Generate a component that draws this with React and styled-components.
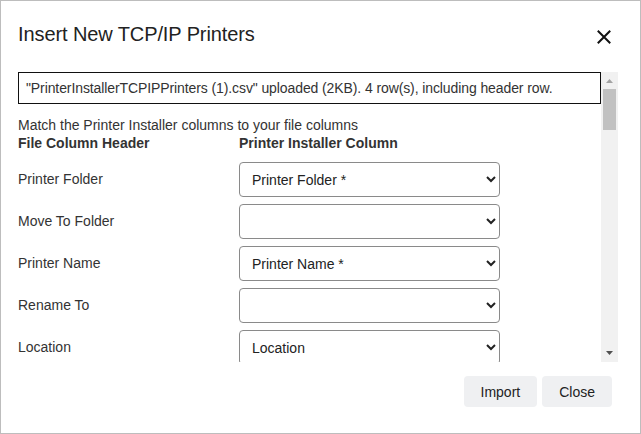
import React from 'react';
import styled, { createGlobalStyle } from 'styled-components';

const GlobalStyle = createGlobalStyle`
  html, body {
    margin: 0;
    padding: 0;
    background: #fff;
  }
  * {
    box-sizing: border-box;
  }
`;

const Dialog = styled.div`
  width: 641px;
  height: 434px;
  border: 1px solid #bdbdbd;
  background: #fff;
  display: flex;
  flex-direction: column;
  font-family: "Liberation Sans", Arial, sans-serif;
  color: #222;
`;

const Header = styled.div`
  display: flex;
  justify-content: space-between;
  align-items: flex-start;
  padding: 22px 29px 0 17px;
  height: 71px;
  flex-shrink: 0;
`;

const Title = styled.h2`
  margin: 0;
  font-size: 20px;
  font-weight: 400;
  line-height: 23px;
  letter-spacing: -0.1px;
  color: #222;
`;

const CloseButton = styled.button`
  border: none;
  background: none;
  padding: 0;
  margin-top: 7px;
  width: 14px;
  height: 14px;
  display: flex;
  cursor: pointer;
`;

const ScrollFrame = styled.div`
  display: flex;
  height: 290px;
  flex-shrink: 0;
  margin: 0 22px 0 17px;
`;

const ScrollArea = styled.div`
  flex: 1;
  min-width: 0;
  overflow: hidden;
  font-size: 14px;
`;

const ScrollBar = styled.div`
  width: 17px;
  flex-shrink: 0;
  background: #f1f1f1;
  display: flex;
  flex-direction: column;
`;

const ScrollArrow = styled.div`
  height: 17px;
  display: flex;
  justify-content: center;
  align-items: ${p => (p.$down ? 'flex-start' : 'flex-end')};
  padding: ${p => (p.$down ? '6px 0 0' : '0 0 6px')};
`;

const ScrollTrack = styled.div`
  flex: 1;
  padding: 0 2px;
`;

const ScrollThumb = styled.div`
  height: 41px;
  background: #c1c1c1;
`;

const FileBox = styled.div`
  border: 1px solid #111;
  height: 32px;
  padding: 0 7px;
  display: flex;
  align-items: center;
  color: #333;
  letter-spacing: -0.1px;
`;

const Intro = styled.div`
  margin-top: 12px;
  line-height: 18px;
  color: #333;
`;

const ColumnHeads = styled.div`
  display: grid;
  grid-template-columns: 221px 261px;
  line-height: 18px;
  font-weight: 700;
  color: #333;
`;

const Rows = styled.div`
  display: grid;
  grid-template-columns: 221px 261px;
  row-gap: 7px;
  margin-top: 10px;
  padding-bottom: 10px;
`;

const Label = styled.div`
  display: flex;
  align-items: center;
  height: 35px;
  padding-bottom: 1px;
  color: #333;
`;

const Select = styled.select`
  height: 35px;
  width: 261px;
  border: 1px solid #8a8a8a;
  border-radius: 4px;
  padding: 0 8px;
  font-family: "Liberation Sans", Arial, sans-serif;
  font-size: 14px;
  color: #222;
  background: #fff;
`;

const Footer = styled.div`
  display: flex;
  justify-content: flex-end;
  gap: 5px;
  padding: 14px 28px 0 0;
`;

const Button = styled.button`
  height: 31px;
  padding: 0 17px;
  border: none;
  border-radius: 4px;
  background: #eff0f2;
  font-family: "Liberation Sans", Arial, sans-serif;
  font-size: 14px;
  color: #222;
  cursor: pointer;
`;

const columns = [
  ['Printer Folder', 'Printer Folder *'],
  ['Move To Folder', ''],
  ['Printer Name', 'Printer Name *'],
  ['Rename To', ''],
  ['Location', 'Location'],
  ['Comment', 'Comment'],
  ['IP Address', 'IP Address *'],
  ['Port Name', 'Port Name'],
];

const options = ['', ...columns.map(c => c[1]).filter(Boolean)];

const App = () => {
  return (
    <>
      <GlobalStyle />
      <Dialog>
        <Header>
          <Title>Insert New TCP/IP Printers</Title>
          <CloseButton aria-label="Close">
            <svg width="14" height="14" viewBox="0 0 14 14">
              <path d="M1.5 1.5 L12.5 12.5 M12.5 1.5 L1.5 12.5" stroke="#111" strokeWidth="2" strokeLinecap="square" />
            </svg>
          </CloseButton>
        </Header>
        <ScrollFrame>
          <ScrollArea>
            <FileBox>"PrinterInstallerTCPIPPrinters (1).csv" uploaded (2KB). 4 row(s), including header row.</FileBox>
            <Intro>Match the Printer Installer columns to your file columns</Intro>
            <ColumnHeads>
              <div>File Column Header</div>
              <div>Printer Installer Column</div>
            </ColumnHeads>
            <Rows>
              {columns.map(([label, value]) => (
                <React.Fragment key={label}>
                  <Label>{label}</Label>
                  <Select defaultValue={value}>
                    {options.map(o => (
                      <option key={o} value={o}>{o}</option>
                    ))}
                  </Select>
                </React.Fragment>
              ))}
            </Rows>
          </ScrollArea>
          <ScrollBar>
            <ScrollArrow>
              <svg width="7" height="4" viewBox="0 0 7 4">
                <path d="M0 4 L3.5 0 L7 4 Z" fill="#a3a3a3" />
              </svg>
            </ScrollArrow>
            <ScrollTrack>
              <ScrollThumb />
            </ScrollTrack>
            <ScrollArrow $down>
              <svg width="7" height="4" viewBox="0 0 7 4">
                <path d="M0 0 L7 0 L3.5 4 Z" fill="#505050" />
              </svg>
            </ScrollArrow>
          </ScrollBar>
        </ScrollFrame>
        <Footer>
          <Button>Import</Button>
          <Button>Close</Button>
        </Footer>
      </Dialog>
    </>
  );
};

export default App;
